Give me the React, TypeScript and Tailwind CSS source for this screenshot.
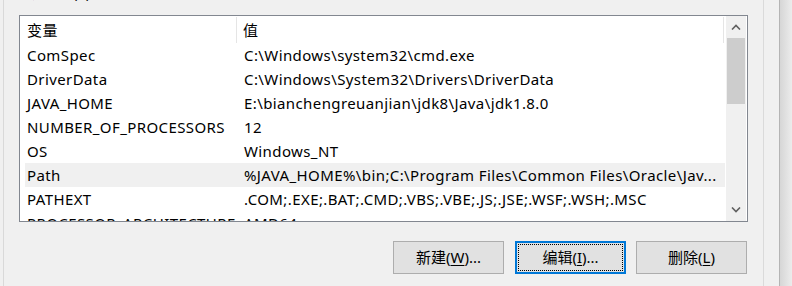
import React from "react"

const rows: { name: string; value: string; selected?: boolean }[] = [
    { name: "ComSpec", value: "C:\\Windows\\system32\\cmd.exe" },
    { name: "DriverData", value: "C:\\Windows\\System32\\Drivers\\DriverData" },
    { name: "JAVA_HOME", value: "E:\\bianchengreuanjian\\jdk8\\Java\\jdk1.8.0" },
    { name: "NUMBER_OF_PROCESSORS", value: "12" },
    { name: "OS", value: "Windows_NT" },
    { name: "Path", value: "%JAVA_HOME%\\bin;C:\\Program Files\\Common Files\\Oracle\\Jav...", selected: true },
    { name: "PATHEXT", value: ".COM;.EXE;.BAT;.CMD;.VBS;.VBE;.JS;.JSE;.WSF;.WSH;.MSC" },
    { name: "PROCESSOR_ARCHITECTURE", value: "AMD64" },
]

const font = "font-['Noto_Sans','Noto_Sans_CJK_SC',sans-serif]"

const Chevron: React.FC<{ up?: boolean }> = ({ up }) => (
    <svg width="10" height="6" viewBox="0 0 10 6" className="block">
        <path d={up ? "M1 5.5 L5 1.5 L9 5.5" : "M1 0.5 L5 4.5 L9 0.5"} fill="none" stroke="#606060" strokeWidth="1.6" />
    </svg>
)

const Btn: React.FC<{ pre: string; key_: string; post: string; focused?: boolean; className?: string }> = ({ pre, key_, post, focused, className }) => {
    if (focused)
        return (
            <div className={`w-[111px] h-[33px] border-2 border-[#0078d7] bg-[#e1e1e1] p-px ${className ?? ""}`}>
                <div className="w-full h-full border border-dotted border-black flex items-center justify-center text-[15px] text-black">
                    {pre}<span className="underline underline-offset-2">{key_}</span>{post}
                </div>
            </div>
        )
    return (
        <div className={`w-[111px] h-[33px] border border-[#adadad] bg-[#e1e1e1] flex items-center justify-center text-[15px] text-black ${className ?? ""}`}>
            {pre}<span className="underline underline-offset-2">{key_}</span>{post}
        </div>
    )
}

export default function App() {
    return (
        <div className={`w-[792px] h-[286px] bg-[#f0f0f0] flex overflow-hidden ${font}`}>
            <div className="w-[3px] shrink-0" />
            <div className="w-px shrink-0 bg-[#d9d9d9]" />
            <div className="w-[759px] shrink-0 flex flex-col">
                {/* group label, scrolled mostly out of view */}
                <div className="h-[20px] -mt-[18px] pl-[9px] text-[15px] leading-[20px] text-black whitespace-nowrap">
                    系统变量(<span className="underline">S</span>)
                </div>
                <div className="ml-[15px] mt-[13px] w-[729px] h-[207px] border border-[#828790] bg-white flex">
                    <div className="w-[706px] flex flex-col overflow-hidden tracking-[0.4px]">
                        <div className="h-[27px] shrink-0 flex text-[15px] text-black">
                            <div className="w-[217px] pl-[7px] flex items-center border-r border-[#e5e5e5] mt-px">变量</div>
                            <div className="w-[487px] pl-[6px] flex items-center border-r border-[#e5e5e5] mt-px">值</div>
                        </div>
                        {rows.map(r => (
                            <div key={r.name} className={`ml-[5px] w-[700px] h-[24px] shrink-0 flex items-center text-[15px] text-black whitespace-nowrap ${r.selected ? "bg-[#f0f0f0]" : ""}`}>
                                <div className="w-[214px] pl-[2px] overflow-hidden">{r.name}</div>
                                <div className="flex-1 pl-[5px] overflow-hidden">{r.value}</div>
                            </div>
                        ))}
                    </div>
                    <div className="w-[20px] bg-[#f0f0f0] flex flex-col">
                        <div className="h-[22px] flex items-center justify-center"><Chevron up /></div>
                        <div className="h-[66px] mx-px bg-[#cdcdcd]" />
                        <div className="flex-1" />
                        <div className="h-[22px] flex items-center justify-center"><Chevron /></div>
                    </div>
                    <div className="w-px" />
                </div>
                <div className="mt-[19px] ml-[389px] flex text-black">
                    <Btn pre="新建(" key_="W" post=")..." />
                    <Btn pre="编辑(" key_="I" post=")..." focused className="ml-[11px]" />
                    <Btn pre="删除(" key_="L" post=")" className="ml-[10px]" />
                </div>
            </div>
            <div className="w-px shrink-0 bg-[#dadada]" />
            <div className="w-[15px] shrink-0" />
            <div className="flex-1 border-l border-[#b4b4b4] bg-gradient-to-r from-[#d6d6d6] to-[#ececec]" />
        </div>
    )
}
